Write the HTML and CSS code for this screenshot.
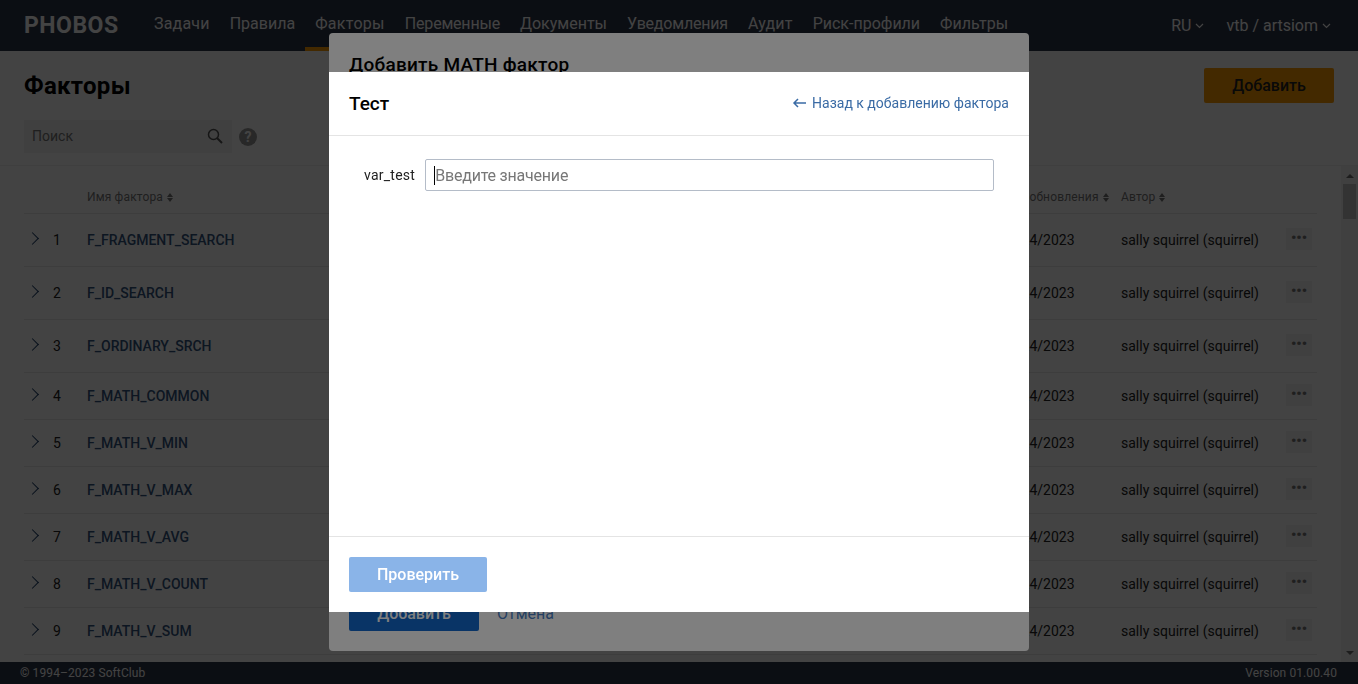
FILE: index.html
```html
<!DOCTYPE html>
<html lang="ru">
<head>
    <meta charset="UTF-8">
    <title>PHOBOS - Факторы</title>
    <link rel="stylesheet" href="styles.css">
</head>
<body>
    <div class="app">
        <header class="topbar">
            <div class="logo">PHOBOS</div>
            <nav class="nav">
                <a class="wide">Задачи</a>
                <a>Правила</a>
                <a class="active">Факторы</a>
                <a class="tight">Переменные</a>
                <a>Документы</a>
                <a class="tight">Уведомления</a>
                <a class="wide">Аудит</a>
                <a>Риск-профили</a>
                <a>Фильтры</a>
            </nav>
            <div class="user-menu">
                <span class="menu-item">RU<svg class="caret" viewBox="0 0 9 6"><path d="M1 1l3.5 3.5L8 1" fill="none" stroke="currentColor" stroke-width="1.2"/></svg></span>
                <span class="menu-item">vtb / artsiom<svg class="caret" viewBox="0 0 9 6"><path d="M1 1l3.5 3.5L8 1" fill="none" stroke="currentColor" stroke-width="1.2"/></svg></span>
            </div>
        </header>

        <main class="content">
            <div class="page-head">
                <h1>Факторы</h1>
                <button class="btn-add">Добавить</button>
            </div>
            <div class="search-row">
                <div class="search">
                    <span>Поиск</span>
                    <svg viewBox="0 0 16 16" width="16" height="16"><circle cx="6.5" cy="6.5" r="5" fill="none" stroke="currentColor" stroke-width="1.5"/><path d="M10 10l5 5" stroke="currentColor" stroke-width="2"/></svg>
                </div>
                <span class="help">?</span>
            </div>
            <div class="table-panel">
                <div class="table">
                    <div class="row head">
                        <span></span><span></span>
                        <span>Имя фактора<i class="sort"></i></span>
                        <span class="col-date">Дата обновления<i class="sort"></i></span>
                        <span>Автор<i class="sort"></i></span>
                        <span></span>
                    </div>
                    <div class="row tall"><i class="chev"></i><span class="num">1</span><a>F_FRAGMENT_SEARCH</a><span>03/24/2023</span><span>sally squirrel (squirrel)</span><b class="dots">•••</b></div>
                    <div class="row tall"><i class="chev"></i><span class="num">2</span><a>F_ID_SEARCH</a><span>03/24/2023</span><span>sally squirrel (squirrel)</span><b class="dots">•••</b></div>
                    <div class="row tall"><i class="chev"></i><span class="num">3</span><a>F_ORDINARY_SRCH</a><span>03/24/2023</span><span>sally squirrel (squirrel)</span><b class="dots">•••</b></div>
                    <div class="row"><i class="chev"></i><span class="num">4</span><a>F_MATH_COMMON</a><span>03/24/2023</span><span>sally squirrel (squirrel)</span><b class="dots">•••</b></div>
                    <div class="row"><i class="chev"></i><span class="num">5</span><a>F_MATH_V_MIN</a><span>03/24/2023</span><span>sally squirrel (squirrel)</span><b class="dots">•••</b></div>
                    <div class="row"><i class="chev"></i><span class="num">6</span><a>F_MATH_V_MAX</a><span>03/24/2023</span><span>sally squirrel (squirrel)</span><b class="dots">•••</b></div>
                    <div class="row"><i class="chev"></i><span class="num">7</span><a>F_MATH_V_AVG</a><span>03/24/2023</span><span>sally squirrel (squirrel)</span><b class="dots">•••</b></div>
                    <div class="row"><i class="chev"></i><span class="num">8</span><a>F_MATH_V_COUNT</a><span>03/24/2023</span><span>sally squirrel (squirrel)</span><b class="dots">•••</b></div>
                    <div class="row"><i class="chev"></i><span class="num">9</span><a>F_MATH_V_SUM</a><span>03/24/2023</span><span>sally squirrel (squirrel)</span><b class="dots">•••</b></div>
                </div>
                <div class="scrollbar">
                    <i class="arrow-up"></i>
                    <i class="thumb"></i>
                    <i class="arrow-down"></i>
                </div>
            </div>
        </main>

        <footer class="footer">
            <span>© 1994–2023 SoftClub</span>
            <span>Version 01.00.40</span>
        </footer>
    </div>

    <div class="overlay overlay-first"></div>
    <div class="modal modal-factor">
        <h2>Добавить MATH фактор</h2>
        <div class="modal-factor-actions">
            <button class="btn-primary">Добавить</button>
            <a class="link-cancel">Отмена</a>
        </div>
    </div>

    <div class="overlay overlay-second"></div>
    <div class="modal modal-test">
        <div class="test-head">
            <h2>Тест</h2>
            <a class="back-link">
                <svg viewBox="0 0 14 10" width="14" height="10"><path d="M14 5H2M6 1L2 5l4 4" fill="none" stroke="currentColor" stroke-width="1.5"/></svg>
                Назад к добавлению фактора
            </a>
        </div>
        <div class="test-body">
            <label for="var-test">var_test</label>
            <div class="field">
                <i class="cursor"></i>
                <span class="placeholder">Введите значение</span>
            </div>
        </div>
        <div class="test-foot">
            <button class="btn-check">Проверить</button>
        </div>
    </div>
</body>
</html>
```

FILE: styles.css
```css
* {
    margin: 0;
    padding: 0;
    box-sizing: border-box;
}
body {
    font-family: Roboto, "Liberation Sans", sans-serif;
    font-size: 14px;
    color: #222;
    background: #fff;
    overflow: hidden;
    height: 100vh;
}
.app {
    height: 684px;
    display: flex;
    flex-direction: column;
}

/* top bar */
.topbar {
    height: 51px;
    flex: none;
    background: #2d3548;
    color: #fff;
    display: flex;
    align-items: center;
    padding: 0 27px 0 24px;
}
.logo {
    font-size: 23px;
    font-weight: 700;
    width: 130px;
    color: #fff;
    letter-spacing: 0.5px;
}
.nav {
    display: flex;
    gap: 20px;
    height: 100%;
    font-size: 16px;
    flex: 1;
}
.nav a {
    display: flex;
    align-items: center;
    height: 100%;
    padding-bottom: 4px;
    position: relative;
}
.nav a.wide {
    letter-spacing: 0.2px;
}
.nav a.tight {
    letter-spacing: -0.2px;
}
.nav a.active {
    letter-spacing: 0.3px;
}
.nav a.active::after {
    content: "";
    position: absolute;
    left: -10px;
    right: -10px;
    bottom: 0;
    height: 4px;
    background: #ff9d00;
}
.user-menu {
    display: flex;
    gap: 22px;
    font-size: 16px;
}
.menu-item {
    display: flex;
    align-items: center;
    gap: 4px;
}
.caret {
    width: 9px;
    height: 6px;
}

/* page */
.content {
    flex: 1;
    min-height: 0;
    display: flex;
    flex-direction: column;
    background: #fff;
}
.page-head {
    display: flex;
    justify-content: space-between;
    align-items: flex-start;
    padding: 17px 24px 0;
    height: 69px;
}
h1 {
    font-size: 24px;
    font-weight: 700;
    color: #000;
    margin-top: 4px;
    letter-spacing: 0.3px;
}
.btn-add {
    width: 130px;
    height: 35px;
    background: #ff9d00;
    border: none;
    border-radius: 2px;
    font: 500 16px Roboto, sans-serif;
    color: #222;
}
.search-row {
    display: flex;
    align-items: center;
    gap: 7px;
    padding: 0 24px;
    height: 33px;
    flex: none;
}
.search {
    width: 208px;
    height: 33px;
    background: #f2f2f2;
    display: flex;
    align-items: center;
    justify-content: space-between;
    padding: 0 9px 1px 8px;
    color: #777;
}
.search svg {
    color: #555;
}
.help {
    width: 18px;
    height: 18px;
    border-radius: 50%;
    background: #999;
    color: #fff;
    font-size: 14px;
    font-weight: 700;
    text-align: center;
    line-height: 18px;
}

/* table */
.table-panel {
    flex: 1;
    min-height: 0;
    margin-top: 12px;
    border-top: 1px solid #f0f0f0;
    background: #fff;
    display: flex;
    overflow: hidden;
}
.table {
    flex: 1;
    padding: 0 24px;
}
.row {
    height: 47px;
    display: grid;
    grid-template-columns: 29px 34px 913px 121px 165px 26px;
    align-items: center;
    border-bottom: 1px solid #e8e8e8;
}
.row.tall {
    height: 53px;
}
.row.head {
    font-size: 12px;
    color: #777;
    height: 48px;
    padding-top: 14px;
    letter-spacing: 0.15px;
}
.col-date {
    margin-left: -2px;
}
.row a {
    color: #33557f;
    font-weight: 500;
}
.num {
    color: #222;
}
.chev {
    width: 9px;
    height: 9px;
    margin-left: 4px;
    border-top: 1.5px solid #1a3a66;
    border-right: 1.5px solid #1a3a66;
    transform: rotate(45deg);
    margin-top: -3px;
}
.dots {
    height: 22px;
    background: #f2f2f2;
    color: #777;
    font-size: 15px;
    line-height: 20px;
    text-align: center;
    margin-top: -3px;
}
.sort {
    display: inline-block;
    width: 6px;
    height: 9px;
    margin-left: 4px;
    vertical-align: -1px;
}
.sort::before,
.sort::after {
    content: "";
    display: block;
    border-left: 3px solid transparent;
    border-right: 3px solid transparent;
}
.sort::before {
    border-bottom: 4px solid #777;
    margin-bottom: 1px;
}
.sort::after {
    border-top: 4px solid #777;
}
.scrollbar {
    width: 17px;
    flex: none;
    background: #f1f1f1;
    display: flex;
    flex-direction: column;
    align-items: center;
    padding: 8px 0 7px;
}
.thumb {
    width: 13px;
    height: 35px;
    background: #c1c1c1;
    margin-top: 6px;
}
.arrow-up {
    border-left: 4px solid transparent;
    border-right: 4px solid transparent;
    border-bottom: 4px solid #707070;
}
.arrow-down {
    margin-top: auto;
    border-left: 4px solid transparent;
    border-right: 4px solid transparent;
    border-top: 4px solid #707070;
}

/* footer */
.footer {
    height: 22px;
    flex: none;
    background: #2d3548;
    color: #fff;
    font-size: 12px;
    display: flex;
    justify-content: space-between;
    align-items: center;
    padding: 0 21px 0 20px;
    letter-spacing: 0.1px;
}

/* dialogs */
.overlay {
    position: fixed;
    inset: 0;
}
.overlay-first {
    background: rgba(0, 0, 0, 0.475);
}
.overlay-second {
    background: rgba(0, 0, 0, 0.5);
}
.modal {
    position: fixed;
    left: 329px;
    width: 700px;
    background: #fff;
}
.modal-factor {
    top: 33px;
    height: 618px;
    border-radius: 4px;
    padding: 20px;
    display: flex;
    flex-direction: column;
    justify-content: space-between;
}
.modal-factor h2 {
    font-size: 19px;
    font-weight: 500;
    color: #000;
    letter-spacing: 0.25px;
}
.modal-factor-actions {
    display: flex;
    align-items: center;
    gap: 18px;
}
.btn-primary {
    width: 130px;
    height: 36px;
    background: #1268cc;
    color: #fff;
    border: none;
    border-radius: 2px;
    font: 500 16px Roboto, sans-serif;
}
.link-cancel {
    color: #4a7ec4;
    font-size: 16px;
}
.modal-test {
    top: 72px;
    height: 540px;
    display: flex;
    flex-direction: column;
}
.test-head {
    height: 64px;
    flex: none;
    display: flex;
    justify-content: space-between;
    align-items: center;
    padding: 0 20px 1px;
    border-bottom: 1px solid #e4e4e4;
}
.test-head h2 {
    font-size: 19px;
    font-weight: 500;
    color: #000;
}
.back-link {
    display: flex;
    align-items: center;
    gap: 6px;
    color: #3a6ba5;
    font-size: 14px;
}
.test-body {
    flex: 1;
    display: flex;
    align-items: flex-start;
    padding: 23px 35px 0 35px;
    gap: 10px;
}
.test-body label {
    font-size: 14px;
    color: #222;
    line-height: 32px;
    letter-spacing: 0.25px;
}
.field {
    flex: 1;
    height: 32px;
    border: 1px solid #b4bcc8;
    border-radius: 2px;
    display: flex;
    align-items: center;
    padding-left: 8px;
    font-size: 16px;
    color: #777;
    letter-spacing: -0.2px;
}
.cursor {
    width: 1px;
    height: 19px;
    background: #000;
    flex: none;
}
.test-foot {
    height: 76px;
    flex: none;
    border-top: 1px solid #e4e4e4;
    padding: 20px;
}
.btn-check {
    width: 138px;
    height: 35px;
    background: #8ab4e8;
    color: #fff;
    border: none;
    border-radius: 2px;
    font: 500 16px Roboto, sans-serif;
}
```
